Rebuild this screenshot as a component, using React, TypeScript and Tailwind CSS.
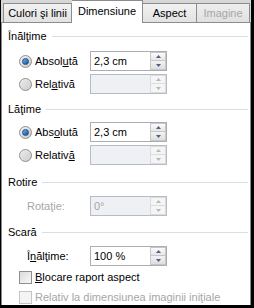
import React from "react";

const font = { fontFamily: '"Liberation Sans", Arial, sans-serif' };

function Section({ title, className = "" }: { title: string; className?: string }) {
  return (
    <div className={`flex items-center h-[16px] pl-[6px] pr-[2px] ${className}`}>
      <span className="text-[11px] leading-none text-black">{title}</span>
      <div className="flex-1 h-px bg-[#d5dfe5] ml-[5px]" />
    </div>
  );
}

function Radio({ checked }: { checked?: boolean }) {
  return (
    <span className="w-[13px] h-[13px] rounded-full border border-[#8e8f8f] bg-gradient-to-br from-[#f4f4f4] to-[#c9c9c9] flex items-center justify-center shrink-0">
      {checked ? (
        <span className="w-[7px] h-[7px] rounded-full bg-gradient-to-br from-[#6fb6ee] to-[#0f4f9c] border border-[#1b4f86]" />
      ) : (
        <span className="w-[9px] h-[9px] rounded-full bg-gradient-to-br from-[#e9e9e9] to-[#d0d0d0]" />
      )}
    </span>
  );
}

function Arrow({ up, disabled }: { up?: boolean; disabled?: boolean }) {
  return (
    <svg width="5" height="3" viewBox="0 0 5 3">
      <path
        d={up ? "M2.5 0 L5 3 L0 3 Z" : "M0 0 L5 0 L2.5 3 Z"}
        fill={disabled ? "#b8b8b8" : "#4d6185"}
      />
    </svg>
  );
}

function Spin({ value, disabled }: { value?: string; disabled?: boolean }) {
  return (
    <div
      className={`w-[77px] h-[20px] border flex ${
        disabled ? "border-[#b4bcc8] bg-[#eef0f3]" : "border-[#abadb3] bg-white"
      }`}
    >
      <span
        className={`flex-1 pl-[3px] text-[11px] leading-[18px] ${
          disabled ? "text-[#a6a6a6]" : "text-black"
        }`}
      >
        {value}
      </span>
      <div className="w-[16px] flex flex-col bg-white">
        <div
          className={`h-[9px] border flex items-center justify-center ${
            disabled ? "border-[#dcdcdc] bg-[#f5f5f5]" : "border-[#c7c7c7] bg-gradient-to-b from-[#fbfbfb] to-[#e6e6e6]"
          }`}
        >
          <Arrow up disabled={disabled} />
        </div>
        <div
          className={`h-[9px] border border-t-0 flex items-center justify-center ${
            disabled ? "border-[#dcdcdc] bg-[#f5f5f5]" : "border-[#c7c7c7] bg-gradient-to-b from-[#f3f3f3] to-[#dedede]"
          }`}
        >
          <Arrow disabled={disabled} />
        </div>
      </div>
    </div>
  );
}

function RadioRow({
  label,
  checked,
  value,
  className = "",
}: {
  label: React.ReactNode;
  checked?: boolean;
  value?: string;
  className?: string;
}) {
  return (
    <div className={`flex items-center h-[22px] pl-[17px] ${className}`}>
      <Radio checked={checked} />
      <span className="w-[55px] ml-[3px] text-[11px] text-black">{label}</span>
      <Spin value={value} disabled={!checked} />
    </div>
  );
}

function Check({ label, disabled, className = "" }: { label: React.ReactNode; disabled?: boolean; className?: string }) {
  return (
    <div className={`flex items-center h-[16px] pl-[17px] ${className}`}>
      <span
        className={`w-[13px] h-[13px] border shrink-0 ${
          disabled
            ? "border-[#c5c5c5] bg-[#f4f4f4]"
            : "border-[#8e8f8f] bg-gradient-to-br from-[#dcdcdc] to-[#f8f8f8]"
        }`}
      />
      <span className={`ml-[3px] text-[11px] whitespace-nowrap ${disabled ? "text-[#a6a6a6]" : "text-black"}`}>{label}</span>
    </div>
  );
}

export default function App() {
  return (
    <div className="w-[254px] h-[308px] bg-black pl-px pr-[3px] pb-[3px]" style={font}>
      <div className="h-full flex flex-col bg-[#d7d7d7]">
        {/* tabs */}
        <div className="h-[22px] flex items-end pl-[2px] relative z-10 whitespace-nowrap text-center">
          <div className="shrink-0 w-[69px] h-[19px] border border-b-0 border-[#8c8c8c] bg-gradient-to-b from-[#f2f2f2] to-[#e2e2e2] text-[11px] leading-[18px] text-black">
            Culori şi linii
          </div>
          <div className="shrink-0 w-[71px] h-[23px] -mb-px border border-b-0 border-l-0 border-[#8c8c8c] bg-white text-[11px] leading-[20px] text-black">
            Dimensiune
          </div>
          <div className="shrink-0 w-[54px] h-[19px] border border-b-0 border-l-0 border-[#8c8c8c] bg-gradient-to-b from-[#f2f2f2] to-[#e2e2e2] text-[11px] leading-[18px] text-black">
            Aspect
          </div>
          <div className="shrink-0 w-[53px] h-[19px] border border-b-0 border-l-0 border-[#8c8c8c] bg-gradient-to-b from-[#eeeeee] to-[#e0e0e0] text-[11px] leading-[18px] text-[#a6a6a6]">
            Imagine
          </div>
        </div>

        {/* panel */}
        <div className="flex-1 bg-white border border-[#8c8c8c] border-b-0 pt-[5px]">
          <Section title="Înălţime" />
          <RadioRow
            className="mt-[6px]"
            checked
            value="2,3 cm"
            label={
              <>
                Absol<u>u</u>tă
              </>
            }
          />
          <RadioRow
            className="mt-px"
            label={
              <>
                Rel<u>a</u>tivă
              </>
            }
          />
          <Section title="Lăţime" className="mt-[6px]" />
          <RadioRow
            className="mt-[4px]"
            checked
            value="2,3 cm"
            label={
              <>
                Abs<u>o</u>lută
              </>
            }
          />
          <RadioRow
            className="mt-px"
            label={
              <>
                Relativ<u>ă</u>
              </>
            }
          />
          <Section title="Rotire" className="mt-[8px]" />
          <div className="flex items-center h-[22px] pl-[25px] mt-[5px]">
            <span className="w-[63px] text-[11px] text-[#a6a6a6]">Rotaţie:</span>
            <Spin value="0°" disabled />
          </div>
          <Section title="Scară" className="mt-[7px]" />
          <div className="flex items-center h-[22px] pl-[25px] mt-[5px]">
            <span className="w-[63px] text-[11px] text-black">
              Î<u>n</u>ălţime:
            </span>
            <Spin value="100 %" />
          </div>
          <Check
            className="mt-[2px]"
            label={
              <>
                <u>B</u>locare raport aspect
              </>
            }
          />
          <Check className="mt-[4px]" disabled label="Relativ la dimensiunea imaginii iniţiale" />
        </div>
      </div>
    </div>
  );
}
